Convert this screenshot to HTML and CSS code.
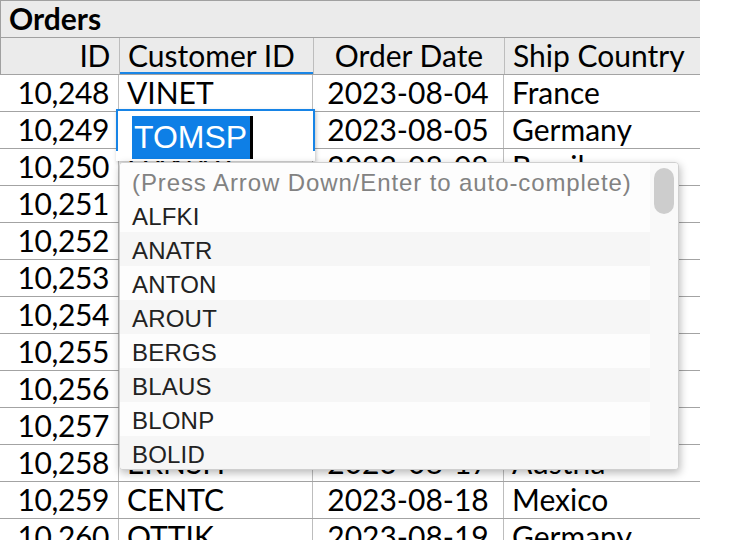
FILE: index.html
```html
<!DOCTYPE html>
<html>
<head>
<meta charset="utf-8">
<link rel="stylesheet" href="styles.css">
</head>
<body>
<div class="grid-wrap">
  <div class="title">Orders</div>
  <div class="row head">
    <div class="c id">ID</div>
    <div class="c cust active">Customer ID</div>
    <div class="c date">Order Date</div>
    <div class="c ship">Ship Country</div>
  </div>
  <div class="row"><div class="c id">10,248</div><div class="c cust">VINET</div><div class="c date">2023-08-04</div><div class="c ship">France</div></div>
  <div class="row"><div class="c id">10,249</div><div class="c cust">TOMSP</div><div class="c date">2023-08-05</div><div class="c ship">Germany</div></div>
  <div class="row"><div class="c id">10,250</div><div class="c cust">HANAR</div><div class="c date">2023-08-08</div><div class="c ship">Brazil</div></div>
  <div class="row"><div class="c id">10,251</div><div class="c cust">VICTE</div><div class="c date">2023-08-08</div><div class="c ship">France</div></div>
  <div class="row"><div class="c id">10,252</div><div class="c cust">SUPRD</div><div class="c date">2023-08-09</div><div class="c ship">Belgium</div></div>
  <div class="row"><div class="c id">10,253</div><div class="c cust">HANAR</div><div class="c date">2023-08-10</div><div class="c ship">Brazil</div></div>
  <div class="row"><div class="c id">10,254</div><div class="c cust">CHOPS</div><div class="c date">2023-08-11</div><div class="c ship">Switzerland</div></div>
  <div class="row"><div class="c id">10,255</div><div class="c cust">RICSU</div><div class="c date">2023-08-12</div><div class="c ship">Switzerland</div></div>
  <div class="row"><div class="c id">10,256</div><div class="c cust">WELLI</div><div class="c date">2023-08-15</div><div class="c ship">Brazil</div></div>
  <div class="row"><div class="c id">10,257</div><div class="c cust">HILAA</div><div class="c date">2023-08-16</div><div class="c ship">Venezuela</div></div>
  <div class="row"><div class="c id">10,258</div><div class="c cust">ERNSH</div><div class="c date">2023-08-17</div><div class="c ship">Austria</div></div>
  <div class="row"><div class="c id">10,259</div><div class="c cust">CENTC</div><div class="c date">2023-08-18</div><div class="c ship">Mexico</div></div>
  <div class="row"><div class="c id">10,260</div><div class="c cust">OTTIK</div><div class="c date">2023-08-19</div><div class="c ship">Germany</div></div>

  <div class="editor">
    <div class="frame"><span class="sel">TOMSP</span><span class="caret"></span></div>
  </div>

  <div class="popup">
    <div class="list">
      <div class="hint">(Press Arrow Down/Enter to auto-complete)</div>
      <div class="item">ALFKI</div>
      <div class="item alt">ANATR</div>
      <div class="item">ANTON</div>
      <div class="item alt">AROUT</div>
      <div class="item">BERGS</div>
      <div class="item alt">BLAUS</div>
      <div class="item">BLONP</div>
      <div class="item alt">BOLID</div>
    </div>
    <div class="scroll"><div class="thumb"></div></div>
  </div>
</div>
</body>
</html>
```

FILE: styles.css
```css
html, body {
  margin: 0;
  padding: 0;
  background: #ffffff;
}
body {
  font-family: "Lato", "DejaVu Sans", sans-serif;
  color: #000;
  overflow: hidden;
  width: 730px;
  height: 540px;
}
.grid-wrap {
  position: relative;
  width: 700px;
}
.title {
  box-sizing: border-box;
  height: 38px;
  background: #ebebeb;
  border-top: 1px solid #a0a0a0;
  border-bottom: 1px solid #a0a0a0;
  border-left: 1px solid #a0a0a0;
  font-weight: 700;
  font-size: 30px;
  line-height: 34px;
  padding-left: 8px;
}
.row {
  display: grid;
  grid-template-columns: 119px 194px 191px 196px;
  box-sizing: border-box;
  height: 37px;
  border-bottom: 1px solid #a3a3a3;
  font-size: 30px;
  line-height: 34px;
  background: #fff;
}
.row.head {
  background: #ebebeb;
  border-left: 1px solid #a0a0a0;
}
.c {
  box-sizing: border-box;
  border-right: 1px solid #bdbdbd;
  white-space: nowrap;
  overflow: hidden;
  padding: 0 8px;
}
.c.ship { border-right: none; }
.c.id { text-align: right; padding-right: 9px; letter-spacing: -0.4px; }
.c.date { text-align: center; padding: 0; }
.head .c { position: relative; }
.head .c.active::after {
  content: "";
  position: absolute;
  left: 0;
  right: -1px;
  bottom: 0;
  height: 2px;
  background: #1a86e6;
}

.editor {
  position: absolute;
  left: 116px;
  top: 109px;
  width: 199px;
  height: 52px;
  background: #fff;
  box-shadow: 1px 2px 4px rgba(0,0,0,0.25);
}
.frame {
  box-sizing: border-box;
  height: 42px;
  border: 2px solid #1784e6;
  border-bottom: none;
  padding: 5px 0 0 14px;
  display: flex;
  align-items: flex-start;
  font-family: "Liberation Sans", Arial, sans-serif;
  font-size: 32px;
}
.sel {
  background: #0e7fe6;
  color: #fff;
  height: 43px;
  line-height: 43px;
  padding: 0 3px 0 2px;
}
.caret {
  width: 3px;
  height: 43px;
  background: #000;
}

.popup {
  position: absolute;
  left: 119px;
  top: 162px;
  width: 560px;
  height: 308px;
  box-sizing: border-box;
  background: #fcfcfc;
  border: 1px solid #cfcfcf;
  border-radius: 4px;
  box-shadow: 1px 3px 8px rgba(0,0,0,0.28);
  display: flex;
  overflow: hidden;
  font-family: "Liberation Sans", Arial, sans-serif;
  font-size: 24px;
  color: #222222;
}
.list {
  width: 530px;
}
.hint {
  height: 35px;
  line-height: 40px;
  padding-left: 12px;
  color: #828282;
  white-space: nowrap;
  letter-spacing: 0.9px;
  background: #fdfdfd;
}
.item {
  height: 34px;
  line-height: 37px;
  padding-left: 12px;
  letter-spacing: 0.2px;
  background: #fdfdfd;
}
.item.alt {
  background: #f6f6f6;
}
.scroll {
  flex: 1;
  background: #f9f9f9;
  position: relative;
}
.thumb {
  position: absolute;
  left: 4px;
  top: 5px;
  width: 20px;
  height: 46px;
  border-radius: 10px;
  background: #cdcdcd;
}
```
